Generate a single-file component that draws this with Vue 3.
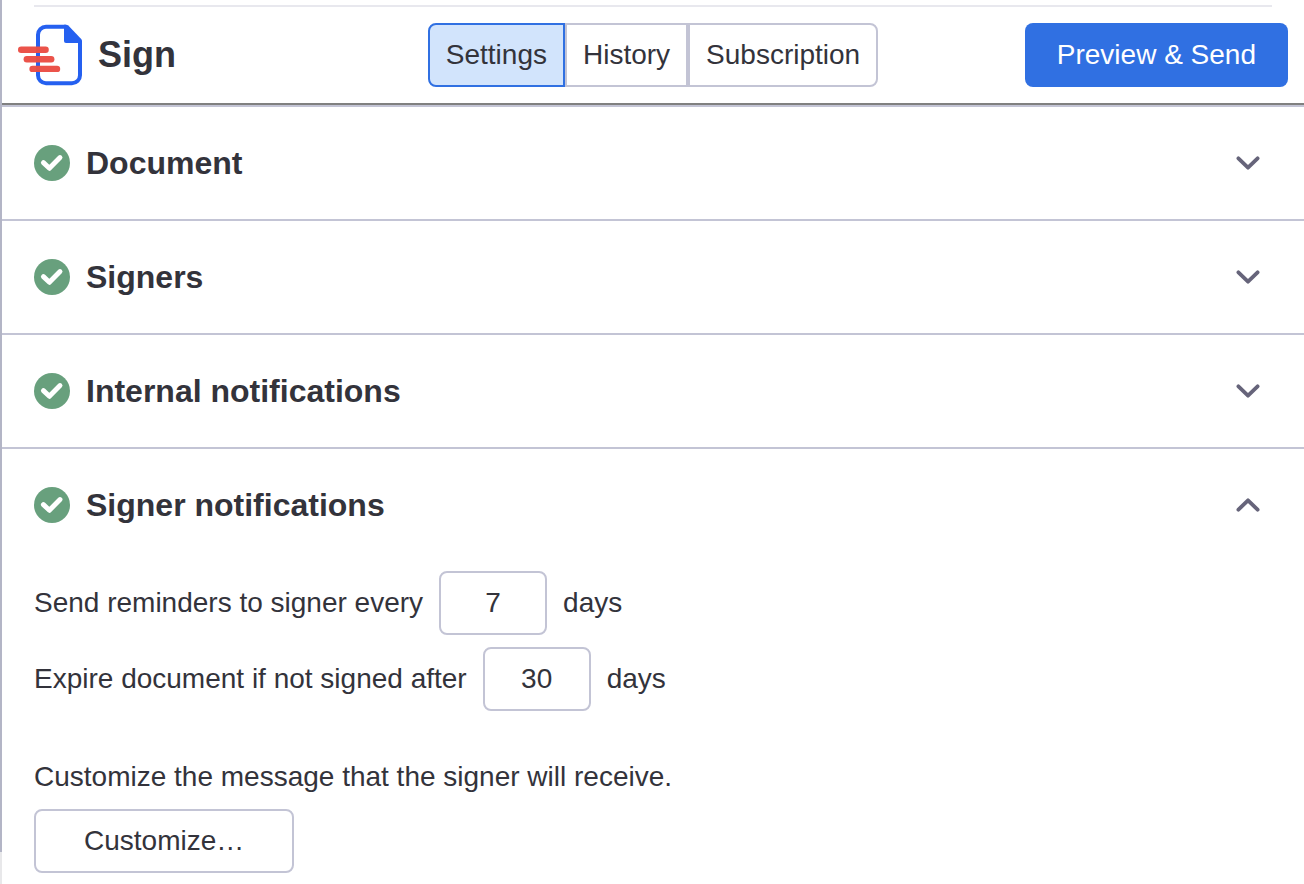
<script setup>
import { reactive, ref } from 'vue'

const tabs = ['Settings', 'History', 'Subscription']
const activeTab = ref('Settings')

const sections = reactive([
  { id: 'document', title: 'Document', open: false },
  { id: 'signers', title: 'Signers', open: false },
  { id: 'internal', title: 'Internal notifications', open: false },
  { id: 'signer', title: 'Signer notifications', open: true }
])

const reminderDays = ref('7')
const expireDays = ref('30')
</script>

<template>
  <div class="page">
    <div class="rail"></div>
    <div class="panel">
      <header class="header">
        <div class="brand">
          <svg class="logo" viewBox="0 0 64 64" aria-hidden="true">
            <path
              d="M48 3.7H28a8 8 0 0 0-8 8v40.600a8 8 0 0 0 8 8h26a8 8 0 0 0 8-8V18"
              fill="none"
              stroke="#2560f0"
              stroke-width="4"
            />
            <path
              d="M46 1.700H48.200Q49.400 1.700 50.300 2.600L63.200 16Q64 16.900 64 18V20H48q-2 0-2-2z"
              fill="#2560f0"
            />
            <g stroke="#eb4e45" stroke-width="6.400" stroke-linecap="round" opacity="0.97">
              <path d="M3.200 26.700H27.600" />
              <path d="M8.800 36.300H33.200" />
              <path d="M14.600 45.900H39" />
            </g>
          </svg>
          <h1>Sign</h1>
        </div>
        <nav class="tabs">
          <button
            v-for="tab in tabs"
            :key="tab"
            type="button"
            class="tab"
            :class="{ active: activeTab === tab }"
            @click="activeTab = tab"
          >
            {{ tab }}
          </button>
        </nav>
        <button type="button" class="primary-btn">Preview &amp; Send</button>
      </header>

      <section v-for="s in sections" :key="s.id" class="section">
        <h2>
          <button
            type="button"
            class="section-toggle"
            :aria-expanded="s.open"
            @click="s.open = !s.open"
          >
            <svg class="check" viewBox="0 0 36 36" aria-hidden="true">
              <circle cx="18" cy="18" r="18" fill="#68a07d" />
              <path
                d="M9.400 17.600l6 5.700L26 12.500"
                fill="none"
                stroke="#fff"
                stroke-width="4.900"
                stroke-linecap="round"
                stroke-linejoin="round"
              />
            </svg>
            <span class="title">{{ s.title }}</span>
            <svg class="chevron" viewBox="0 0 24 24" aria-hidden="true">
              <path
                :d="s.open ? 'M2.400 16.700L12 7.300l9.600 9.400' : 'M2.400 7.300l9.600 9.400 9.600-9.400'"
                fill="none"
                stroke="#66647a"
                stroke-width="3.800"
                stroke-linecap="round"
                stroke-linejoin="round"
              />
            </svg>
          </button>
        </h2>

        <div v-if="s.open && s.id === 'signer'" class="section-body">
          <div class="field">
            <label for="reminder-days">Send reminders to signer every</label>
            <input id="reminder-days" v-model="reminderDays" type="text" inputmode="numeric" />
            <span>days</span>
          </div>
          <div class="field">
            <label for="expire-days">Expire document if not signed after</label>
            <input id="expire-days" v-model="expireDays" type="text" inputmode="numeric" />
            <span>days</span>
          </div>
          <div class="message">
            <p>Customize the message that the signer will receive.</p>
            <button type="button" class="outline-btn">Customize…</button>
          </div>
        </div>
      </section>
    </div>
  </div>
</template>

<style>
body {
  margin: 0;
  background: #ffffff;
}
</style>

<style scoped>
.page {
  display: flex;
  min-height: 100vh;
  font-family: 'Liberation Sans', Arial, Helvetica, sans-serif;
  font-size: 28px;
  line-height: 40px;
  color: #33333b;
}

.page * {
  box-sizing: border-box;
}

button,
input {
  font: inherit;
  color: inherit;
  margin: 0;
}

button {
  cursor: pointer;
}

.rail {
  flex: none;
  width: 2px;
  background: linear-gradient(#b3b5c6, #b3b5c6) no-repeat top / 100% calc(100% - 32px), #e8e8ea;
}

.panel {
  flex: 1;
  min-width: 0;
}

.panel::before {
  content: '';
  display: block;
  height: 2px;
  margin: 5px 32px 0;
  background: #e8e8ee;
}

.header {
  display: grid;
  grid-template-columns: 1fr auto 1fr;
  align-items: center;
  padding: 16px;
  border-bottom: 2px solid #808080;
}

.brand {
  display: flex;
  align-items: center;
  gap: 16px;
}

.logo {
  width: 64px;
  height: 64px;
}

h1 {
  margin: 0;
  font-size: 36px;
  line-height: 40px;
}

.tabs {
  display: flex;
}

.tab {
  height: 64px;
  padding: 0 16px;
  border: 2px solid #c3c4d5;
  background: #ffffff;
}

.tab:first-child {
  border-radius: 8px 0 0 8px;
}

.tab:last-child {
  border-radius: 0 8px 8px 0;
}

.tab.active {
  border-color: #3070e2;
  background: #d2e4fc;
}

.primary-btn {
  justify-self: end;
  height: 64px;
  padding: 0 32px;
  border: none;
  border-radius: 8px;
  background: #3070e2;
  color: #ffffff;
}

.section {
  border-top: 2px solid #c3c4d5;
}

h2 {
  margin: 0;
  font-size: 32px;
  line-height: 40px;
}

.section-toggle {
  display: flex;
  align-items: center;
  gap: 16px;
  width: 100%;
  height: 112px;
  padding: 0 44px 0 32px;
  border: none;
  background: none;
  text-align: left;
}

.check {
  flex: none;
  width: 36px;
  height: 36px;
}

.title {
  flex: 1;
}

.chevron {
  flex: none;
  width: 24px;
  height: 24px;
}

.section-body {
  display: flex;
  flex-direction: column;
  gap: 12px;
  padding: 10px 32px;
}

.field {
  display: flex;
  align-items: center;
  gap: 16px;
}

.field input {
  width: 108px;
  height: 64px;
  padding: 0 16px;
  border: 2px solid #c3c4d5;
  border-radius: 8px;
  background: #ffffff;
  text-align: center;
}

.message {
  margin-top: 34px;
}

.message p {
  margin: 0 0 12px;
}

.outline-btn {
  height: 64px;
  padding: 0 48px;
  border: 2px solid #c3c4d5;
  border-radius: 8px;
  background: #ffffff;
}
</style>
